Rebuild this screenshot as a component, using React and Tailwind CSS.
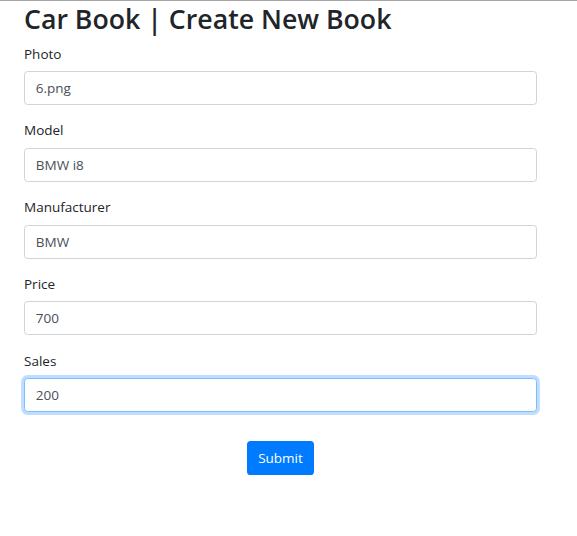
import React from "react";

const fields = [
  { label: "Photo", value: "6.png" },
  { label: "Model", value: "BMW i8" },
  { label: "Manufacturer", value: "BMW" },
  { label: "Price", value: "700" },
  { label: "Sales", value: "200", focused: true },
];

export default function App() {
  return (
    <div className="min-h-[536px] w-[577px] border-t border-[#a3a3a3] bg-white font-['Segoe_UI','Open_Sans','Noto_Sans',sans-serif] text-[#212529]">
      <div className="w-[513px] ml-[24px]">
        {/* Page title */}
        <h3 className="text-[26.7px] leading-[30px] font-semibold mt-[2.9px] mb-[8.3px]">
          Car Book | Create New Book
        </h3>

        {/* Form fields */}
        <form onSubmit={(e) => e.preventDefault()}>
          {fields.map((f) => (
            <div key={f.label} className="mb-[14px]">
              <label className="block text-[13.5px] leading-[21.6px] pt-[1.5px] mb-[5.7px]">
                {f.label}
              </label>
              <input
                defaultValue={f.value}
                className={
                  f.focused
                    ? "block w-full h-[34px] px-[10.8px] text-[13.5px] text-[#495057] bg-white border border-[#80bdff] rounded-[3.6px] outline-none shadow-[0_0_0_2.9px_rgba(0,123,255,0.25)]"
                    : "block w-full h-[34px] px-[10.8px] text-[13.5px] text-[#495057] bg-white border border-[#ced4da] rounded-[3.6px] outline-none"
                }
              />
            </div>
          ))}

          <div className="flex justify-center pt-[15px]">
            <button
              type="submit"
              className="h-[34px] px-[10.8px] text-[13.5px] text-white bg-[#007bff] rounded-[3.6px]"
            >
              Submit
            </button>
          </div>
        </form>
      </div>
    </div>
  );
}
